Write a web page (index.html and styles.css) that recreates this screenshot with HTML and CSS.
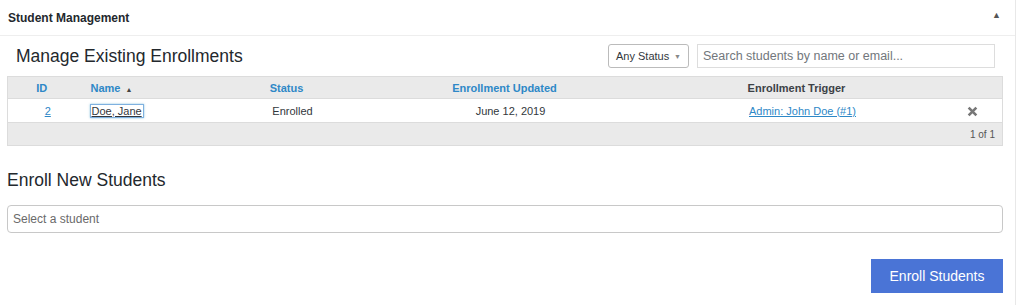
FILE: index.html
```html
<!DOCTYPE html>
<html lang="en">
<head>
  <meta charset="UTF-8" />
  <title>Student Management</title>
  <link rel="stylesheet" href="styles.css">
</head>
<body>

  <div class="panel">
    <div class="panel-head">
      <h2>Student Management</h2>
      <span class="toggle">&#9650;</span>
    </div>

    <div class="panel-body">
      <div class="toolbar">
        <h3>Manage Existing Enrollments</h3>
        <div class="filters">
          <div class="status-select">Any Status <span class="caret">&#9660;</span></div>
          <input class="search" type="text" placeholder="Search students by name or email...">
        </div>
      </div>

      <table class="enrollments">
        <thead>
          <tr>
            <th class="c-id">ID</th>
            <th class="c-name">Name <span class="sort">&#9650;</span></th>
            <th class="c-status">Status</th>
            <th class="c-date">Enrollment Updated</th>
            <th class="c-trigger plain">Enrollment Trigger</th>
            <th class="c-act"></th>
          </tr>
        </thead>
        <tbody>
          <tr>
            <td class="c-id"><a href="#">2</a></td>
            <td class="c-name"><a href="#" class="focused">Doe, Jane</a></td>
            <td class="c-status">Enrolled</td>
            <td class="c-date">June 12, 2019</td>
            <td class="c-trigger"><a href="#">Admin: John Doe (#1)</a></td>
            <td class="c-act">
              <svg class="remove" viewBox="0 0 10 10">
                <path d="M1.5 1.5 L8.5 8.5 M8.5 1.5 L1.5 8.5"/>
              </svg>
            </td>
          </tr>
        </tbody>
        <tfoot>
          <tr>
            <td colspan="6">1 of 1</td>
          </tr>
        </tfoot>
      </table>

      <h3 class="enroll-title">Enroll New Students</h3>
      <div class="student-select">Select a student</div>

      <div class="actions">
        <button class="enroll-btn">Enroll Students</button>
      </div>
    </div>
  </div>

</body>
</html>
```

FILE: styles.css
```css
* {
  box-sizing: border-box;
}

body {
  margin: 0;
  background: #fff;
  font-family: 'Liberation Sans', Arial, sans-serif;
  color: #32373c;
}

.panel {
  width: 1016px;
  height: 305px;
  border-right: 1px solid #e8e8e8;
}

.panel-head {
  height: 36px;
  display: flex;
  align-items: center;
  justify-content: space-between;
  padding: 0 14px 0 8px;
  border-bottom: 1px solid #eeeeee;
}

.panel-head h2 {
  margin: 0;
  font-size: 12px;
  font-weight: 700;
  color: #23282d;
}

.toggle {
  font-size: 9px;
  color: #555;
  margin-top: -5px;
}

.panel-body {
  padding: 0 12px 0 7px;
}

.toolbar {
  height: 40px;
  display: flex;
  align-items: center;
  justify-content: space-between;
  padding: 0 8px 0 9px;
}

.toolbar h3 {
  margin: 0;
  font-size: 17.5px;
  font-weight: 400;
  color: #23282d;
}

.filters {
  display: flex;
  align-items: center;
  gap: 8px;
}

.status-select {
  height: 24px;
  width: 81px;
  padding: 0 7px;
  display: flex;
  align-items: center;
  justify-content: space-between;
  border: 1px solid #bbb;
  border-radius: 3px;
  font-size: 11px;
  color: #32373c;
}

.caret {
  font-size: 7px;
  color: #888;
}

.search {
  width: 298px;
  height: 24px;
  border: 1px solid #ddd;
  padding: 0 5px;
  font-family: inherit;
  font-size: 12.5px;
  color: #32373c;
}

.search::placeholder {
  color: #72777c;
}

.enrollments {
  width: 996px;
  border-collapse: collapse;
  border: 1px solid #dcdcdc;
  font-size: 11px;
}

.enrollments th {
  height: 22px;
  background: #eaeaea;
  color: #2e88c7;
  font-weight: 700;
  text-align: center;
  padding: 0 12px 0 0;
  border-bottom: 1px solid #dcdcdc;
}

.enrollments th.plain {
  color: #3c4146;
}

.enrollments th.c-name {
  text-align: left;
  padding-left: 3px;
}

.sort {
  font-size: 7px;
  color: #444;
  margin-left: 2px;
}

.enrollments td {
  height: 24px;
  text-align: center;
  padding: 0;
  color: #32373c;
}

.enrollments td.c-name {
  text-align: left;
  padding-left: 3px;
}

.enrollments a {
  color: #2e88c7;
}

.enrollments a.focused {
  color: #32373c;
  outline: 1px solid #7fb1e0;
  box-shadow: 0 0 2px 1px rgba(30, 140, 190, 0.5);
  padding: 0 1px;
}

.c-id { width: 80px; }
.c-name { width: 133px; }
.c-status { width: 144px; }
.c-date { width: 292px; }
.c-trigger { width: 292px; }

.remove {
  width: 11px;
  height: 11px;
  stroke: #777;
  stroke-width: 2.4;
  fill: none;
  vertical-align: middle;
  margin-left: -6px;
}

.enrollments tfoot td {
  height: 23px;
  background: #eaeaea;
  border-top: 1px solid #dcdcdc;
  text-align: right;
  padding-right: 7px;
  font-size: 10px;
  color: #555;
}

.enroll-title {
  margin: 24px 0 14px 0;
  font-size: 17.5px;
  font-weight: 400;
  color: #23282d;
}

.student-select {
  width: 996px;
  height: 28px;
  border: 1px solid #c8c8c8;
  border-radius: 4px;
  padding: 0 5px;
  display: flex;
  align-items: center;
  font-size: 12px;
  color: #6a6a6a;
}

.actions {
  width: 996px;
  display: flex;
  justify-content: flex-end;
  padding-top: 26px;
}

.enroll-btn {
  width: 132px;
  height: 34px;
  border: none;
  background: #4a74d6;
  color: #fff;
  font-family: inherit;
  font-size: 14px;
  cursor: pointer;
}
```
